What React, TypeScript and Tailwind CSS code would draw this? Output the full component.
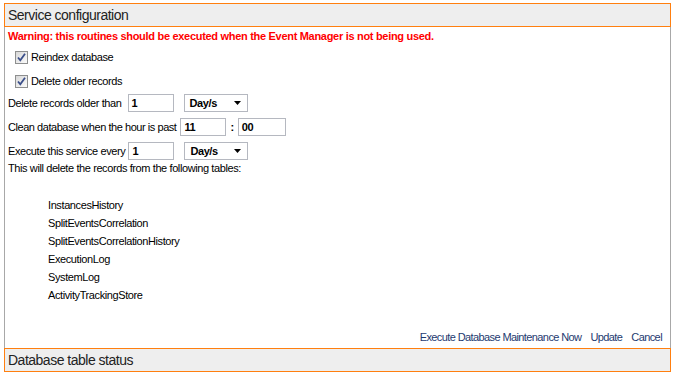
import React from "react";

const font = { fontFamily: '"Liberation Sans", Arial, sans-serif' };

function Check() {
  return (
    <span className="relative inline-block w-[13px] h-[13px] border border-[#8e8f8f] bg-gradient-to-br from-[#d8d8d8] to-[#fbfbfb] shrink-0">
      <svg width="11" height="11" viewBox="0 0 11 11" className="absolute left-0 top-0">
        <path d="M2 5.5 L4.3 8.3 L9 1.8" fill="none" stroke="#3b4f8a" strokeWidth="1.8" />
      </svg>
    </span>
  );
}

function TextBox({ value, w }: { value: string; w: string }) {
  return (
    <div className={`${w} h-[18px] border border-[#b5b8c0] bg-white flex items-center pl-[3px] font-bold text-[11px] text-black`}>
      {value}
    </div>
  );
}

function Select({ value }: { value: string }) {
  return (
    <div className="w-[64px] h-[18px] border border-[#b5b8c0] bg-white flex items-center justify-between pl-[5px] pr-[6px] font-bold text-[11px] text-black">
      <span>{value}</span>
      <svg width="7" height="4" viewBox="0 0 7 4">
        <path d="M0 0 L7 0 L3.5 4 Z" fill="#000" />
      </svg>
    </div>
  );
}

export default function App() {
  const tables = [
    "InstancesHistory",
    "SplitEventsCorrelation",
    "SplitEventsCorrelationHistory",
    "ExecutionLog",
    "SystemLog",
    "ActivityTrackingStore",
  ];
  return (
    <div className="w-[675px] h-[375px] bg-white px-[4px] pt-[3px] text-[11px] tracking-[-0.4px] text-black" style={font}>
      <div className="h-[24px] border border-[#ff7f0f] bg-[#eeeeee] flex items-center pl-[3px] text-[14px] tracking-[-0.5px] text-[#222]">
        Service configuration
      </div>
      <div className="h-[321px] border-x border-[#a8a8a8] flex flex-col pl-[3px]">
        <div className="h-[18px] flex items-center font-bold text-[#ff0000] tracking-[-0.3px]">
          Warning: this routines should be executed when the Event Manager is not being used.
        </div>
        <div className="h-[24px] flex items-center pl-[7px] gap-[3px]">
          <Check />
          <span>Reindex database</span>
        </div>
        <div className="h-[24px] flex items-center pl-[7px] gap-[3px] pt-[1px]">
          <Check />
          <span>Delete older records</span>
        </div>
        <div className="h-[20px] flex items-center mb-[4px]">
          <span className="mr-[6px]">Delete records older than</span>
          <TextBox value="1" w="w-[46px]" />
          <div className="ml-[10px]">
            <Select value="Day/s" />
          </div>
        </div>
        <div className="h-[20px] flex items-center mb-[4px]">
          <span className="mr-[4px] tracking-[-0.45px]">Clean database when the hour is past</span>
          <TextBox value="11" w="w-[46px]" />
          <span className="mx-[4px] font-bold">:</span>
          <TextBox value="00" w="w-[48px]" />
        </div>
        <div className="h-[20px] flex items-center">
          <span className="mr-[3px]">Execute this service every</span>
          <TextBox value="1" w="w-[46px]" />
          <div className="ml-[10px]">
            <Select value="Day/s" />
          </div>
        </div>
        <div className="h-[12px] leading-[12px] mt-[1px]">This will delete the records from the following tables:</div>
        <div className="mt-[22px] flex flex-col pl-[40px]">
          {tables.map((t) => (
            <div key={t} className="h-[18px] flex items-center">
              {t}
            </div>
          ))}
        </div>
        <div className="mt-auto mb-[2px] h-[18px] flex items-center justify-end gap-[9px] pr-[8px] text-[#1e3a70] tracking-[-0.6px]">
          <span>Execute Database Maintenance Now</span>
          <span>Update</span>
          <span>Cancel</span>
        </div>
      </div>
      <div className="h-[24px] border border-[#ff7f0f] bg-[#eeeeee] flex items-center pl-[3px] text-[14px] tracking-[-0.5px] text-[#222]">
        Database table status
      </div>
    </div>
  );
}
